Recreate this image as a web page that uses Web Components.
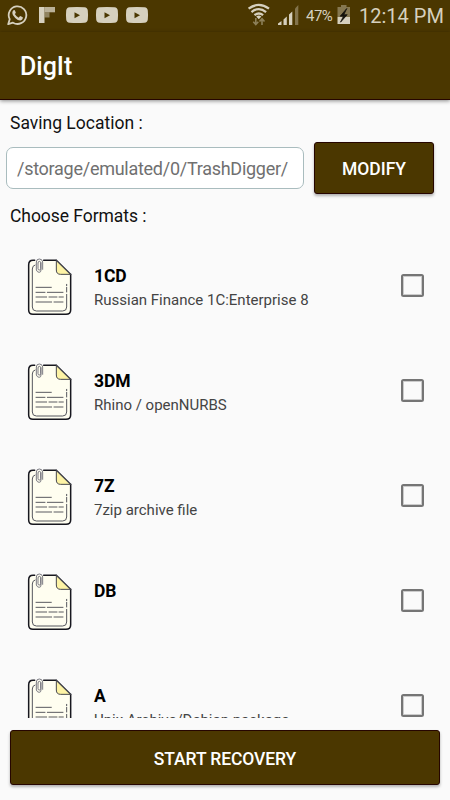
<!DOCTYPE html>
<html lang="en">
<head>
<meta charset="utf-8">
<meta name="viewport" content="width=device-width, initial-scale=1">
<title>DigIt</title>
<style>
  html, body {
    margin: 0;
    height: 100%;
    overflow: hidden;
    background: #fafafa;
    font-family: Roboto, "Liberation Sans", sans-serif;
    color: #111;
    --brand: #4b3700;
    --brand-edge: #260500;
  }
</style>
</head>
<body>
<dig-app>
  <status-bar slot="status" time="12:14 PM" battery="47%"></status-bar>
  <app-bar slot="bar">DigIt</app-bar>
  <save-location slot="location" path="/storage/emulated/0/TrashDigger/">Saving Location :</save-location>
  <format-list slot="formats">
    <span slot="title">Choose Formats :</span>
    <format-row name="1CD">Russian Finance 1C:Enterprise 8</format-row>
    <format-row name="3DM">Rhino / openNURBS</format-row>
    <format-row name="7Z">7zip archive file</format-row>
    <format-row name="DB"></format-row>
    <format-row name="A">Unix Archive/Debian package</format-row>
  </format-list>
  <raised-button slot="action">START RECOVERY</raised-button>
</dig-app>

<script>
/**
 * Define a custom element which renders a static template.
 *
 * @param {string} name - Tag name.
 * @param {string} html - Markup and styles of the shadow root.
 * @param {string[]} attributes - Attributes copied to the element with the same id.
 */
const define = (name, html, attributes = []) => {
  const template = document.createElement('template')
  template.innerHTML = html

  customElements.define(
    name,
    class extends HTMLElement {
      constructor () {
        super()

        this.attachShadow({ mode: 'open' }).appendChild(
          template.content.cloneNode(true)
        )
      }

      connectedCallback () {
        attributes.forEach((attribute) => {
          this.shadowRoot.querySelector(`#${attribute}`).textContent =
            this.getAttribute(attribute)
        })
      }
    }
  )
}

define('dig-app', `
  <style>
    :host {
      display: flex;
      flex-direction: column;
      height: 800px;
      width: 450px;
    }
    .action {
      display: flex;
      height: 55px;
      padding: 12px 10px 15px;
    }
    .action ::slotted(*) {
      flex: 1;
      padding-top: 2px;
      letter-spacing: -0.1px;
    }
    ::slotted(format-list) {
      flex: 1;
      min-height: 0;
    }
  </style>
  <slot name="status"></slot>
  <slot name="bar"></slot>
  <slot name="location"></slot>
  <slot name="formats"></slot>
  <div class="action"><slot name="action"></slot></div>
`)

define('status-bar', `
  <style>
    :host {
      display: flex;
      justify-content: space-between;
      height: 32px;
      background: var(--brand);
      color: #d6d0be;
    }
    svg {
      display: block;
      fill: #d6d0be;
    }
    .right {
      display: flex;
    }
    #battery {
      font-size: 15px;
      line-height: 32px;
      width: 30px;
      letter-spacing: -0.5px;
    }
    #time {
      font-size: 20px;
      line-height: 32px;
      width: 91px;
      white-space: nowrap;
    }
  </style>
  <svg width="150" height="32" viewBox="0 0 150 32">
    <path d="M8.200 24.200L9.700 19.200A8.800 8.800 0 1 1 13 22.700Z" fill="none" stroke="#d6d0be" stroke-width="1.800" stroke-linejoin="round"/>
    <path d="M13.200 10.400q.9-.8 1.600-.1l1 2.200q.1.600-1 1.600 1.300 2.500 3.800 3.600l1.300-1.500q.4-.3.900 0l2 1.100q.3 2.400-2.400 3.100-2.200.2-5.200-2.500-3-2.900-2.900-5 .1-1.700.9-2.500Z"/>
    <path d="M39 7h5.500v16H39z"/>
    <path d="M44.500 7H55v5.300H44.500z" opacity=".8"/>
    <path d="M44.500 12.300h5v5.200h-5z" opacity=".5"/>
    <path fill-rule="evenodd" d="M69.500 7.300Q77 6.500 84.500 7.300 87.500 7.500 87.800 10.500 88.300 15 87.800 19.500 87.500 22.500 84.500 22.700 77 23.500 69.500 22.700 66.500 22.500 66.200 19.500 65.700 15 66.200 10.500 66.500 7.500 69.500 7.300ZM74.500 12.300v6l5.500-3Z"/>
    <path fill-rule="evenodd" transform="translate(30)" d="M69.500 7.300Q77 6.500 84.500 7.300 87.500 7.500 87.800 10.500 88.300 15 87.800 19.500 87.500 22.500 84.500 22.700 77 23.500 69.500 22.700 66.500 22.500 66.200 19.500 65.700 15 66.200 10.500 66.500 7.500 69.500 7.300ZM74.500 12.300v6l5.500-3Z"/>
    <path fill-rule="evenodd" transform="translate(60)" d="M69.500 7.300Q77 6.500 84.500 7.300 87.500 7.500 87.800 10.500 88.300 15 87.800 19.500 87.500 22.500 84.500 22.700 77 23.500 69.500 22.700 66.500 22.500 66.200 19.500 65.700 15 66.200 10.500 66.500 7.500 69.500 7.300ZM74.500 12.300v6l5.500-3Z"/>
  </svg>
  <div class="right">
    <svg width="66" height="32" viewBox="240 0 66 32">
      <g fill="none" stroke="#d6d0be" stroke-width="2.300">
        <path d="M248.600 8.700Q258.800 1.100 269 8.700"/>
        <path d="M251.500 12.100Q258.800 6.200 266.100 12.100"/>
        <path d="M254.500 15.200Q258.800 11.700 263.100 15.200"/>
      </g>
      <path d="M256.200 16.500q2.600-2 5.200 0l-2.600 2.700Z"/>
      <path d="M255.800 18v6M253.300 21.800l2.500 2.700 2.500-2.700M262 25v-6M259.500 21.500l2.500-2.700 2.500 2.700" fill="none" stroke="#8d8059" stroke-width="1.600"/>
      <path d="M278 25v-1.500l3.500-2.500v4zM283.500 25v-5.500l3.300-3v8.500zM289 25V14.500l3.300-3V25z"/>
      <path d="M295 25V8.500l3.300-3.500V25z" opacity=".4"/>
    </svg>
    <span id="battery"></span>
    <svg width="23" height="32" viewBox="336 0 23 32">
      <path d="M337.500 7h3.500V5h5.500v2h3.500v10h-12.500z" opacity=".42"/>
      <path d="M337.500 17H350v7h-12.500z"/>
      <path d="M346.800 8.500l-6.600 7.700h3.300l-3 6 6.700-7.500h-3.400z" fill="#15130c" stroke="#15130c" stroke-width=".8"/>
    </svg>
    <span id="time"></span>
  </div>
`, ['battery', 'time'])

define('app-bar', `
  <style>
    :host {
      display: block;
      box-sizing: border-box;
      height: 68px;
      padding-left: 20px;
      background: var(--brand);
      border-bottom: 1px solid var(--brand-edge);
      box-shadow: 0 1px 4px rgba(0, 0, 0, .45);
      color: #fff;
      font-size: 25px;
      font-weight: 500;
      line-height: 69px;
    }
  </style>
  <slot></slot>
`)

define('raised-button', `
  <style>
    :host {
      display: flex;
      align-items: center;
      justify-content: center;
      box-sizing: border-box;
      background: var(--brand);
      border: 1px solid var(--brand-edge);
      border-radius: 3px;
      box-shadow: 0 2px 3px rgba(0, 0, 0, .3);
      color: #fff;
      font-size: 17.500px;
      font-weight: 500;
      white-space: nowrap;
    }
  </style>
  <slot></slot>
`)

define('save-location', `
  <style>
    :host {
      display: block;
      height: 105px;
      box-sizing: border-box;
      padding: 11px 16px 0 6px;
      font-size: 17.500px;
    }
    label {
      display: block;
      height: 31px;
      padding-left: 4px;
      line-height: 24px;
    }
    .row {
      display: flex;
      align-items: center;
      gap: 10px;
      height: 52px;
    }
    #path {
      flex: 1;
      box-sizing: border-box;
      height: 42px;
      padding-left: 10px;
      border: 1px solid #a9bcbe;
      border-radius: 7px;
      background: #fff;
      color: #707070;
      font-size: 18px;
      letter-spacing: -0.27px;
      line-height: 42px;
      white-space: nowrap;
    }
    raised-button {
      width: 120px;
      height: 52px;
      padding-top: 1px;
    }
  </style>
  <label><slot></slot></label>
  <div class="row">
    <div id="path"></div>
    <raised-button>MODIFY</raised-button>
  </div>
`, ['path'])

define('format-list', `
  <style>
    :host {
      display: flex;
      flex-direction: column;
    }
    .title {
      height: 30px;
      padding-left: 10px;
      font-size: 17.500px;
      letter-spacing: -0.05px;
      line-height: 22px;
    }
    .rows {
      flex: 1;
      min-height: 0;
      overflow: hidden;
    }
  </style>
  <div class="title"><slot name="title"></slot></div>
  <div class="rows"><slot></slot></div>
`)

define('file-icon', `
  <style>
    :host {
      display: block;
      width: 46px;
      height: 60px;
    }
    svg {
      display: block;
    }
  </style>
  <svg width="46" height="60" viewBox="36 21 138 180" fill="none" stroke-linecap="round" stroke-linejoin="round">
    <path d="M52 31H124L166 73V181Q166 193 154 193H54Q41 193 41 180V43Q41 31 52 31Z" fill="#fffef0"/>
    <path d="M124 31V60Q124 73 137 73H166Z" fill="#fdf3a5" stroke="#45464c" stroke-width="3"/>
    <path d="M59 31H54Q41 31 41 45V180Q41 193 54 193H153Q167 193 167 180V73M86 31H124" stroke="#17171f" stroke-width="4.500"/>
    <path d="M124 31L167 73" stroke="#45464c" stroke-width="4"/>
    <path d="M60 45Q52 47 52 57V171Q52 183 64 183H143Q155 183 155 171V133M155 126V112M155 107V103" stroke="#55565d" stroke-width="3"/>
    <path d="M78 38V60Q78 67 72.500 67T64 60V36Q64 27 73 27T83 36V58M69 40V56Q69 60 73 60T77 56V38Q77 34 73 34T69 38" stroke="#707078" stroke-width="2.800"/>
    <path d="M63 112H109M63 127H90M97 127H144M63 141H95M102 141H126M132 141H145M63 156H110M117 156H144" stroke="#5a5a60" stroke-width="3"/>
  </svg>
`)

define('format-row', `
  <style>
    :host {
      display: flex;
      height: 105px;
      box-sizing: border-box;
      padding: 22px 26px 0 27px;
    }
    .text {
      flex: 1;
      padding-left: 21px;
    }
    #name {
      height: 25px;
      padding-top: 7px;
      box-sizing: border-box;
      color: #000;
      font-size: 17.500px;
      font-weight: 700;
      line-height: 25px;
      letter-spacing: -0.1px;
    }
    .description {
      padding-top: 6px;
      color: #444;
      font-size: 15px;
      line-height: 24px;
      white-space: nowrap;
    }
    .box {
      box-sizing: border-box;
      width: 23px;
      height: 23px;
      margin-top: 17px;
      border: 2px solid #757575;
      border-radius: 2.500px;
      box-shadow: inset 0 0 0 1px rgba(117, 117, 117, .35);
    }
  </style>
  <file-icon></file-icon>
  <div class="text">
    <div id="name"></div>
    <div class="description"><slot></slot></div>
  </div>
  <div class="box"></div>
`, ['name'])
</script>
</body>
</html>
